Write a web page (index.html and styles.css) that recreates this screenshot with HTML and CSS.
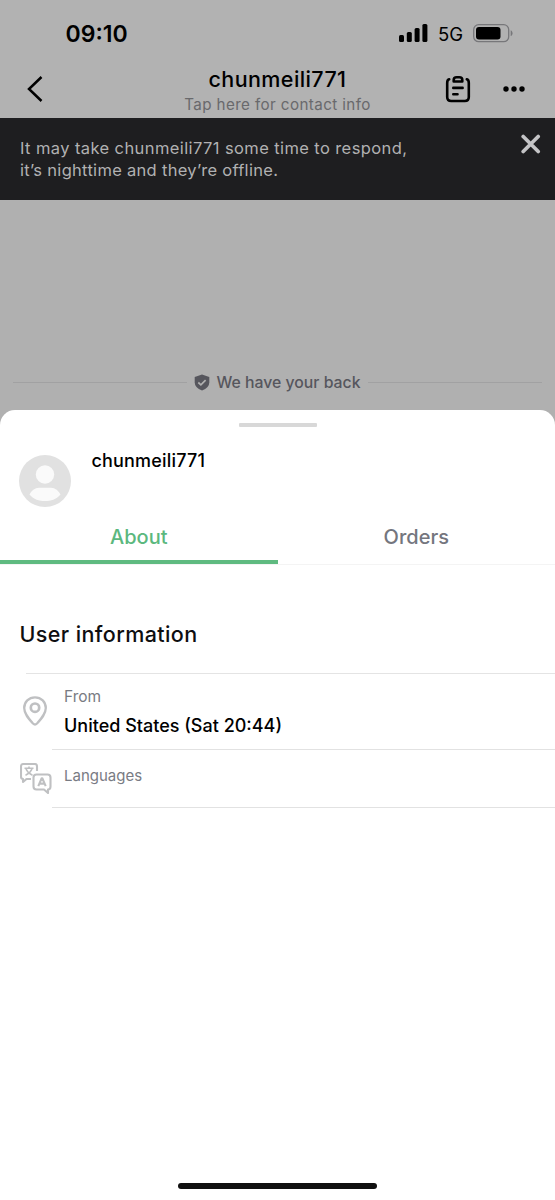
FILE: index.html
```
<!DOCTYPE html>
<html lang="en">
<head>
<meta charset="utf-8">
<title>chunmeili771</title>
<link rel="stylesheet" href="styles.css">
</head>
<body>
<div class="screen">
  <div class="status">
    <span class="time">09:10</span>
    <div class="status-icons">
      <svg width="29" height="18" viewBox="0 0 29 18"><rect x="0" y="11" width="5" height="7" rx="1.5"/><rect x="7.8" y="8" width="5" height="10" rx="1.5"/><rect x="15.6" y="4" width="5" height="14" rx="1.5"/><rect x="23.4" y="0" width="5" height="18" rx="1.5"/></svg>
      <span class="net">5G</span>
      <svg width="40" height="19" viewBox="0 0 40 19"><rect x=".7" y=".7" width="35" height="17" rx="5" fill="none" stroke="#77777a" stroke-width="1.3"/><rect x="3" y="3" width="24.5" height="12.5" rx="3"/><path d="M37.7 6.3c2.4.8 2.4 5 0 5.8z" fill="#77777a"/></svg>
    </div>
  </div>
  <header class="header">
    <svg class="back" width="16" height="26" viewBox="0 0 16 26" fill="none" stroke="#000" stroke-width="2.5"><path d="M14.500 1 2 13l12.500 12"/></svg>
    <div class="who">
      <span class="title">chunmeili771</span>
      <span class="sub">Tap here for contact info</span>
    </div>
    <div class="actions">
      <svg width="26" height="28" viewBox="0 0 26 28" fill="none" stroke="#000" stroke-width="2.600" stroke-linecap="round" stroke-linejoin="round"><path d="M4.200 4.300Q2.200 4.800 2.200 8v14q0 4 4 4h13.600q4 0 4-4V8q0-3.200-2-3.700"/><path d="M8.700 6.500V5q0-2.700 3-2.700h2.600q3 0 3 2.700v1.500z"/><path d="M8.300 12.900h9.300M8.300 19.200h4.200"/></svg>
      <svg width="22" height="6" viewBox="0 0 22 6"><circle cx="3" cy="3" r="2.700"/><circle cx="11" cy="3" r="2.700"/><circle cx="19" cy="3" r="2.700"/></svg>
    </div>
  </header>
  <div class="banner">
    <p class="note"><span class="note-a">It may take chunmeili771 some time to respond,</span><br><span class="note-b">it’s nighttime and they’re offline.</span></p>
    <svg width="20" height="20" viewBox="0 0 20 20" stroke="#c4c4c6" stroke-width="3.700" stroke-linecap="round"><path d="m2.200 2.500 15 15m0-15-15 15"/></svg>
  </div>
  <div class="chat">
    <div class="assure">
      <i class="rule"></i>
      <svg width="16" height="17" viewBox="0 0 16 17"><path d="M8 .5 15.300 3v5.200q0 5.500-7.300 8.300Q.7 13.700.7 8.200V3z" fill="#56565d"/><path d="m4.300 8.500 2.600 2.300 4.700-4.600" fill="none" stroke="#b0b0b0" stroke-width="1.700"/></svg>
      <span class="assure-text">We have your back</span>
      <i class="rule"></i>
    </div>
  </div>
  <main class="sheet">
    <div class="grip"></div>
    <div class="profile">
      <svg width="52" height="52" viewBox="0 0 52 52"><circle cx="26" cy="26" r="26" fill="#e1e1e1"/><circle cx="26" cy="19.500" r="9.200" fill="#fafafa"/><path d="M10.500 39.500C15 31 21 32.800 26 32.800s11-1.800 15.500 6.700C37 44.500 32 46 26 46s-11-1.500-15.500-6.500z" fill="#fafafa"/></svg>
      <span class="name">chunmeili771</span>
    </div>
    <nav class="tabs">
      <div class="tab active"><span class="about">About</span></div>
      <div class="tab"><span class="orders">Orders</span></div>
    </nav>
    <h2 class="heading"><span>User information</span></h2>
    <div class="first-rule"></div>
    <div class="row from">
      <svg class="pin" width="24" height="30" viewBox="0 0 24 30" fill="none" stroke="#bfc0c2" stroke-width="2.300"><path d="M12 1.300C5.800 1.300 1.200 6 1.200 12c0 5.700 4.300 10.500 8.800 15.500q2 2 4 0C18.500 22.500 22.800 17.700 22.800 12c0-6-4.600-10.700-10.800-10.700z"/><circle cx="12" cy="11.700" r="4.200" stroke-width="2.700"/></svg>
      <div class="info"><span class="label label-from">From</span><span class="value">United States (Sat 20:44)</span></div>
    </div>
    <div class="row languages">
      <svg class="lang" width="32" height="31" viewBox="0 0 32 31" fill="none" stroke="#bfc0c2" stroke-width="2.100" stroke-linejoin="round"><path d="M17 8V3.500Q17 1 14.500 1h-11Q1 1 1 3.500v10Q1 16 3 16v3l3.500-3H11"/><path d="M4.500 5.300h9M9 3.400v1.900M6 6q2 4.500 6.500 6.300M12 6q-2 4.500-6.500 6.300" stroke-width="1.600"/><path d="M16.500 11.500h11q3 0 3 3v9q0 3-2.500 3V30l-4-3.500h-7.500q-3 0-3-3v-9q0-3 3-3z"/><path d="m18.300 23.200 3.400-8h.6l3.400 8M19.800 20.600h4.500" stroke-width="2.100"/></svg>
      <div class="info"><span class="label label-lang">Languages</span></div>
    </div>
    <div class="home"></div>
  </main>
</div>
</body>
</html>
```
FILE: styles.css
```
* { box-sizing: border-box; }
body { margin: 0; font-family: Inter, "Liberation Sans", sans-serif; background: #b0b0b0; color: #000; }
svg { display: block; flex: none; }
span { white-space: nowrap; }
.screen { width: 555px; height: 1200px; display: flex; flex-direction: column; overflow: hidden; background: #b0b0b0; }
.status { height: 60px; flex: none; display: flex; justify-content: space-between; padding: 19px 42px 0 65.5px; background: #b2b2b2; }
.time { font-size: 23px; line-height: 30px; font-weight: 600; }
.status-icons { display: flex; height: 28px; align-items: center; }
.net { font-size: 18.5px; margin: 1px 10px 0 10px; }
.header { height: 58px; flex: none; display: grid; grid-template-columns: 140px 1fr 140px; background: #b2b2b2; }
.back { margin: 16px 0 0 27px; }
.who { display: flex; flex-direction: column; align-items: center; padding-top: 5px; }
.title { font-size: 21.5px; line-height: 28px; font-weight: 500; letter-spacing: .4px; }
.sub { font-size: 15.2px; line-height: 23px; color: #69696c; letter-spacing: .4px; }
.actions { display: flex; align-items: center; gap: 32px; padding-left: 29.5px; }
.banner { height: 82px; flex: none; display: flex; justify-content: space-between; padding: 16px 14px 0 20px; background: #1e1e20; color: #b1b1b2; }
.note { margin: 3px 0 0; font-size: 16.5px; line-height: 22px; }
.note-a { letter-spacing: .4px; }
.note-b { letter-spacing: .3px; }
.chat { height: 210px; flex: none; padding: 170px 13px 0; }
.assure { display: flex; align-items: center; height: 24px; }
.assure svg { margin: 0 6px 0 7px; }
.rule { flex: 1; height: 1px; background: #a1a1a2; }
.assure-text { font-size: 15.8px; font-weight: 500; color: #56565d; margin-right: 7px; }
.sheet { flex: 1; background: #fff; border-radius: 15px 15px 0 0; display: flex; flex-direction: column; }
.grip { width: 78px; height: 4px; margin: 13px auto 0; background: #d8d8d8; border-radius: 1px; }
.profile { display: flex; gap: 20px; padding: 28px 19.4px 0; height: 80px; }
.name { font-size: 18px; line-height: 24px; font-weight: 500; margin-top: -6px; letter-spacing: .2px; }
.tabs { display: flex; height: 58px; border-bottom: 1px solid #f4f4f4; }
.tab { flex: 1; height: 57px; padding-top: 18px; text-align: center; font-size: 20px; line-height: 24px; font-weight: 500; color: #74767e; }
.active { color: #5bb87e; border-bottom: 4px solid #5fba80; }
.heading { margin: 55px 0 0 19.5px; font-size: 21.5px; line-height: 28px; font-weight: 500; color: #0e0e10; letter-spacing: .4px; }
.first-rule { height: 1px; margin: 25px 0 0 26px; background: #e4e4e4; }
.row { display: flex; padding-left: 20px; }
.info { flex: none; width: 503px; display: flex; flex-direction: column; border-bottom: 1px solid #e2e2e2; padding-left: 12px; }
.from { height: 76px; }
.pin { margin: 22px 5px 0 3px; }
.label { font-size: 15.5px; line-height: 20px; color: #797b83; }
.from .label { margin-top: 13px; }
.value { font-size: 18px; line-height: 24px; font-weight: 500; margin-top: 7px; }
.languages { height: 58px; }
.lang { margin: 13px 0.5px 0 -0.5px; }
.languages .label { margin-top: 16px; font-size: 15px; }
.home { width: 199px; height: 6px; margin: auto auto 11px; border-radius: 3px; background: #101010; }
```
